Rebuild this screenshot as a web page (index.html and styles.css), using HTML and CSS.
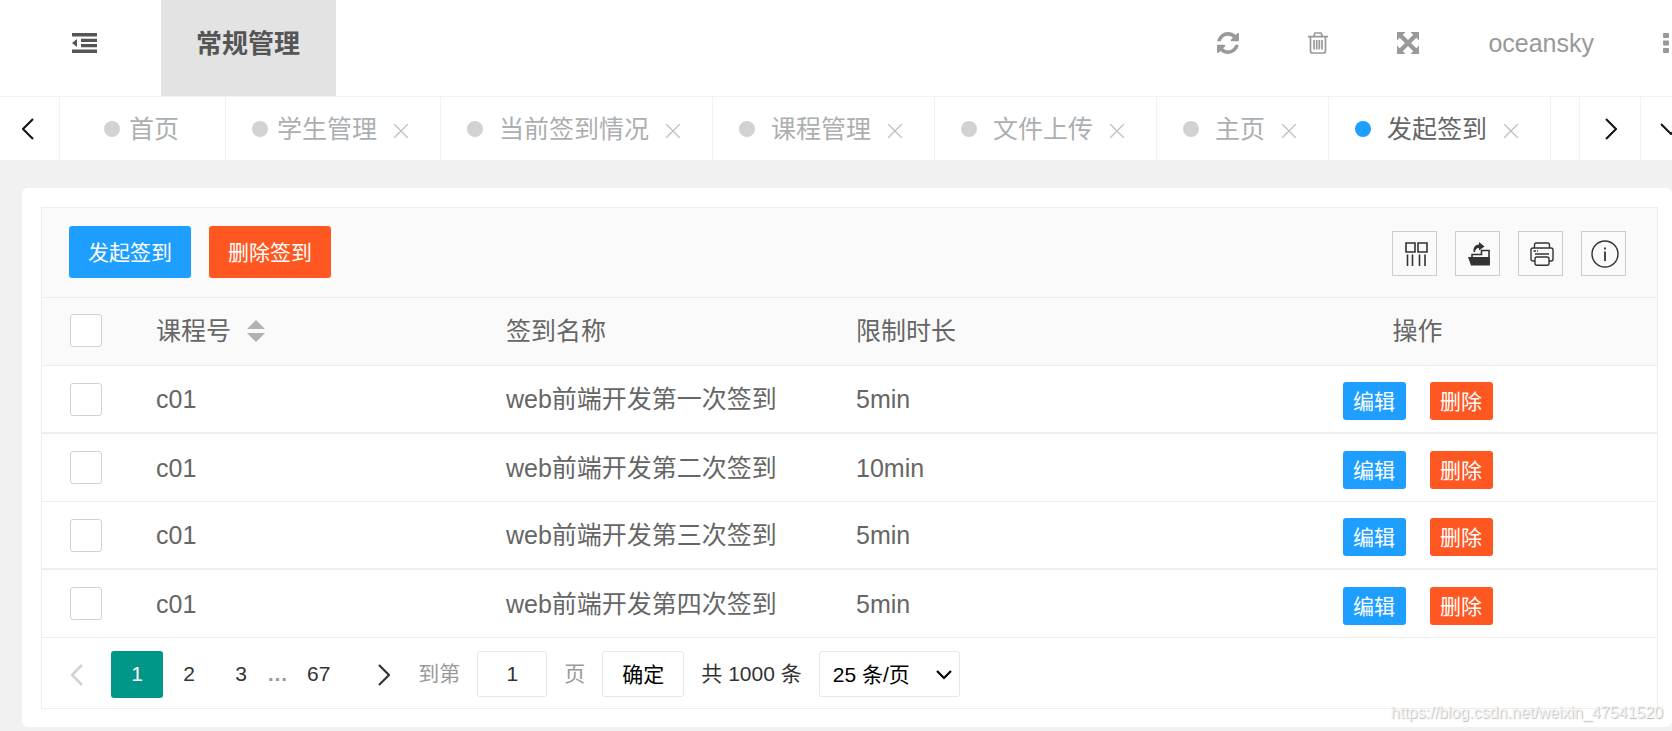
FILE: index.html
```html
<!DOCTYPE html>
<html lang="zh-CN">
<head>
<meta charset="utf-8">
<title>发起签到</title>
<link rel="stylesheet" href="styles.css">
</head>
<body>
<header class="header">
  <button class="menu-toggle" type="button" aria-label="菜单">
    <svg width="25" height="20" viewBox="0 0 25 20" fill="currentColor"><path d="M0 0h25v3.500H0zM9 5.800h16v3.200H9zM9 11h16v3.200H9zM0 16.500h25V20H0zM5 6v8L0 10z"/></svg>
  </button>
  <a class="nav-item" href="#">常规管理</a>
  <div class="header-tools">
    <button type="button" aria-label="刷新">
      <svg width="22" height="22" viewBox="0 0 1536 1536" fill="currentColor"><path d="M1511 928q0 5-1 7-64 268-268 434.500T764 1536q-146 0-282.500-55T238 1324l-129 129q-19 19-45 19t-45-19-19-45V960q0-26 19-45t45-19h448q26 0 45 19t19 45-19 45l-137 137q71 66 161 102t187 36q134 0 250-65t186-179q11-17 53-117 8-23 30-23h192q13 0 22.500 9.500t9.500 22.500zm25-800v448q0 26-19 45t-45 19h-448q-26 0-45-19t-19-45 19-45l138-138Q969 256 768 256q-134 0-250 65T332 500q-11 17-53 117-8 23-30 23H50q-13 0-22.500-9.500T18 608v-7q65-268 270-434.500T768 0q146 0 284 55.500T1297 212l130-129q19-19 45-19t45 19 19 45z"/></svg>
    </button>
    <button type="button" aria-label="清除">
      <svg width="20" height="22" viewBox="0 0 20 22" fill="none" stroke="currentColor" stroke-width="1.700"><path d="M0 4.700h20M5.500 4.500L7 1h6l1.500 3.500M2.500 5v14q0 2 2 2h11q2 0 2-2V5M6 8v9.500M8.700 8v9.500M11.300 8v9.500M14 8v9.500"/></svg>
    </button>
    <button type="button" aria-label="全屏">
      <svg width="22" height="22" viewBox="0 0 22 22" fill="currentColor"><path d="M0 0h8.500L5.800 2.700 11 7.900l5.200-5.200L13.500 0H22v8.500l-2.700-2.700L14.100 11l5.200 5.200 2.700-2.700V22h-8.500l2.700-2.700L11 14.100l-5.200 5.200L8.500 22H0v-8.500l2.700 2.700L7.900 11 2.700 5.800 0 8.500z"/></svg>
    </button>
    <a class="user" href="#">oceansky</a>
    <button type="button" aria-label="更多">
      <svg width="6" height="20" viewBox="0 0 6 20" fill="currentColor"><rect width="6" height="5" rx="1"/><rect y="7.500" width="6" height="5" rx="1"/><rect y="15" width="6" height="5" rx="1"/></svg>
    </button>
  </div>
</header>

<nav class="tabs">
  <button class="tab-arrow" type="button" aria-label="向左"><svg width="12" height="22" viewBox="0 0 12 22" fill="none" stroke="currentColor" stroke-width="2"><path d="M11 1L1 11l10 10"/></svg></button>
  <div class="tab-list">
    <div class="tab home"><i class="dot"></i><a href="#">首页</a></div>
    <div class="tab near"><i class="dot"></i><a href="#">学生管理</a><button class="close" type="button" aria-label="关闭"><svg width="14" height="14" viewBox="0 0 14 14"><path d="M0 0l14 14M14 0L0 14"/></svg></button></div>
    <div class="tab"><i class="dot"></i><a href="#">当前签到情况</a><button class="close" type="button" aria-label="关闭"><svg width="14" height="14" viewBox="0 0 14 14"><path d="M0 0l14 14M14 0L0 14"/></svg></button></div>
    <div class="tab"><i class="dot"></i><a href="#">课程管理</a><button class="close" type="button" aria-label="关闭"><svg width="14" height="14" viewBox="0 0 14 14"><path d="M0 0l14 14M14 0L0 14"/></svg></button></div>
    <div class="tab"><i class="dot"></i><a href="#">文件上传</a><button class="close" type="button" aria-label="关闭"><svg width="14" height="14" viewBox="0 0 14 14"><path d="M0 0l14 14M14 0L0 14"/></svg></button></div>
    <div class="tab"><i class="dot"></i><a href="#">主页</a><button class="close" type="button" aria-label="关闭"><svg width="14" height="14" viewBox="0 0 14 14"><path d="M0 0l14 14M14 0L0 14"/></svg></button></div>
    <div class="tab active"><i class="dot"></i><a href="#">发起签到</a><button class="close" type="button" aria-label="关闭"><svg width="14" height="14" viewBox="0 0 14 14"><path d="M0 0l14 14M14 0L0 14"/></svg></button></div>
  </div>
  <button class="tab-arrow end" type="button" aria-label="向右"><svg width="12" height="22" viewBox="0 0 12 22" fill="none" stroke="currentColor" stroke-width="2"><path d="M1 1l10 10L1 21"/></svg></button>
  <button class="tab-more" type="button" aria-label="更多标签"><svg width="22" height="12" viewBox="0 0 22 12" fill="none" stroke="currentColor" stroke-width="2"><path d="M1 1l10 10L21 1"/></svg></button>
</nav>

<main class="card">
  <section class="grid">
    <div class="toolbar">
      <button class="btn blue" type="button">发起签到</button>
      <button class="btn red" type="button">删除签到</button>
      <div class="tool-icons">
        <button type="button" aria-label="筛选列"><svg width="24" height="24" viewBox="0 0 24 24" fill="none" stroke="currentColor" stroke-width="1.600"><path d="M2 1h9v9H2zM14 1h9v9h-9zM3.500 12.500V24M8.500 12.500V24M15.500 12.500V24M21 12.500V24"/></svg></button>
        <button type="button" aria-label="导出"><svg width="22" height="24" viewBox="0 0 22 24" fill="currentColor"><path d="M0 15h21.800v8.500H3z"/><path d="M4 15.500V12.500h9.500V8.500H21V23" fill="none" stroke="currentColor" stroke-width="1.600"/><path d="M5.500 10q-.5-7.500 5.500-7.500V0l5.500 4.500L11 8.500V6q-3.500 0-4 4z"/></svg></button>
        <button type="button" aria-label="打印"><svg width="24" height="24" viewBox="0 0 24 24" fill="none" stroke="currentColor" stroke-width="1.400"><path d="M4.500 6V3q0-2 2-2h11q2 0 2 2v3M5 19H3q-2 0-2-2V8q0-2 2-2h18q2 0 2 2v9q0 2-2 2h-2M3.500 9h2.500M7 9h1M5 12h14"/><rect x="5" y="15" width="14" height="8.300" rx="2"/></svg></button>
        <button type="button" aria-label="提示"><svg width="28" height="28" viewBox="0 0 28 28" fill="none" stroke="currentColor" stroke-width="1.400"><circle cx="14" cy="14" r="13"/><path d="M14 11.500V21M14 7.500v2" stroke-width="1.800"/></svg></button>
      </div>
    </div>
    <table class="table">
      <colgroup><col class="c-check"><col class="c-data"><col class="c-data"><col class="c-data"><col></colgroup>
      <thead>
        <tr>
          <th><input type="checkbox" aria-label="全选"></th>
          <th><span class="sortable">课程号<svg width="18" height="22" viewBox="0 0 18 22" fill="#b2b2b2"><path d="M9 0l9 9H0zM0 13h18l-9 9z"/></svg></span></th>
          <th>签到名称</th><th>限制时长</th><th class="ops">操作</th>
        </tr>
      </thead>
      <tbody>
        <tr><td><input type="checkbox" aria-label="选择第一行"></td><td>c01</td><td>web前端开发第一次签到</td><td>5min</td><td class="ops"><div class="actions"><button class="mini blue" type="button">编辑</button><button class="mini red" type="button">删除</button></div></td></tr>
        <tr><td><input type="checkbox" aria-label="选择第二行"></td><td>c01</td><td>web前端开发第二次签到</td><td>10min</td><td class="ops"><div class="actions"><button class="mini blue" type="button">编辑</button><button class="mini red" type="button">删除</button></div></td></tr>
        <tr><td><input type="checkbox" aria-label="选择第三行"></td><td>c01</td><td>web前端开发第三次签到</td><td>5min</td><td class="ops"><div class="actions"><button class="mini blue" type="button">编辑</button><button class="mini red" type="button">删除</button></div></td></tr>
        <tr><td><input type="checkbox" aria-label="选择第四行"></td><td>c01</td><td>web前端开发第四次签到</td><td>5min</td><td class="ops"><div class="actions"><button class="mini blue" type="button">编辑</button><button class="mini red" type="button">删除</button></div></td></tr>
      </tbody>
    </table>
    <footer class="pager">
      <button class="prev" type="button" aria-label="上一页"><svg width="12" height="22" viewBox="0 0 12 22" fill="none" stroke="currentColor" stroke-width="2.500"><path d="M11 1L1 11l10 10"/></svg></button>
      <a class="page current" href="#">1</a>
      <a class="page" href="#">2</a>
      <a class="page" href="#">3</a>
      <span class="dots">…</span>
      <a class="page" href="#">67</a>
      <button class="next" type="button" aria-label="下一页"><svg width="12" height="22" viewBox="0 0 12 22" fill="none" stroke="currentColor" stroke-width="2.200"><path d="M1 1l10 10L1 21"/></svg></button>
      <div class="jump">
        <label for="page-no">到第</label>
        <input id="page-no" type="text" value="1">
        <span class="unit">页</span>
        <button class="confirm" type="button">确定</button>
        <span class="total">共 1000 条</span>
        <div class="limit">
          <select aria-label="每页条数"><option>25 条/页</option><option>50 条/页</option></select>
          <svg width="16" height="10" viewBox="0 0 16 10" fill="none" stroke="currentColor" stroke-width="2.200"><path d="M1 1l7 7 7-7"/></svg>
        </div>
      </div>
    </footer>
  </section>
</main>
<div class="watermark">https://blog.csdn.net/weixin_47541520</div>
</body>
</html>
```
FILE: styles.css
```css
* { box-sizing: border-box; }

body {
  margin: 0;
  min-height: 100vh;
  position: relative;
  overflow: hidden;
  background: #f1f1f1;
  color: #666;
  font-family: "Liberation Sans", "Noto Sans CJK SC", sans-serif;
  font-size: 25px;
  line-height: 36px;
}

button, input, select { font: inherit; color: inherit; margin: 0; }
button { padding: 0; border: 0; background: none; cursor: pointer; }
a { color: inherit; text-decoration: none; }
svg { display: block; flex: none; }

.header {
  display: flex;
  height: 97px;
  background: #fff;
  border-bottom: 1px solid #f2f2f2;
}
.menu-toggle {
  width: 161px;
  padding: 0 0 10px 72px;
  color: #555;
}
.nav-item {
  display: flex;
  align-items: center;
  padding: 0 36px 8px 35px;
  background: #e3e3e3;
  color: #555;
  font-size: 26px;
  font-weight: bold;
}
.header-tools {
  display: flex;
  align-items: center;
  gap: 69px;
  margin-left: auto;
  padding: 0 3px 10px 0;
  color: #999;
}

.tabs {
  display: flex;
  height: 63px;
  background: #fff;
}
.tab-arrow, .tab-more {
  display: flex;
  align-items: center;
  flex: none;
  color: #111;
}
.tab-arrow {
  justify-content: center;
  width: 60px;
  padding-right: 4px;
  border-right: 1px solid #f2f2f2;
}
.tab-arrow.end { width: 62px; padding: 0 0 0 2px; border-left: 1px solid #f2f2f2; }
.tab-more { width: 31px; padding-left: 19px; overflow: hidden; }
.tab-list { display: flex; flex: 1; min-width: 0; overflow: hidden; }
.tab {
  display: flex;
  align-items: center;
  flex: none;
  gap: 16px;
  padding: 0 32px 0 26px;
  border-right: 1px solid #f2f2f2;
  color: #acafb1;
}
.tab.home { gap: 9px; padding: 0 46px 0 44px; }
.tab.near .dot { margin-right: -7px; }
.dot { width: 16px; height: 16px; border-radius: 50%; background: #d2d2d2; }
.tab.active { color: #666; }
.tab.active .dot { background: #1e9fff; }
.close { padding: 4px 0 0 1px; color: #c2c2c2; }
.close svg { fill: none; stroke: currentColor; stroke-width: 1.4; }

.card {
  margin: 28px 0 0 22px;
  padding: 19px 14px 18px 19px;
  background: #fff;
  border-radius: 6px;
}
.grid { border: 1px solid #eee; }
.toolbar {
  display: flex;
  align-items: center;
  gap: 18px;
  height: 90px;
  padding: 0 31px 0 27px;
  background: #fafafa;
  border-bottom: 1px solid #eee;
}
.btn {
  height: 52px;
  padding: 2px 19px 0;
  border-radius: 3px;
  color: #fff;
  font-size: 21px;
  margin-bottom: 2px;
}
.blue { background: #1e9fff; }
.red { background: #ff5722; }
.tool-icons { display: flex; gap: 18px; margin: 2px 0 0 auto; }
.tool-icons button {
  display: flex;
  align-items: center;
  justify-content: center;
  width: 45px;
  height: 45px;
  padding: 0 0 0 3px;
  border: 1px solid #ccc;
  color: #333;
}

.table { width: 100%; border-collapse: separate; border-spacing: 0; table-layout: fixed; }
.c-check { width: 88px; }
.c-data { width: 350px; }
.table th, .table td {
  height: 68px;
  padding: 0 26px;
  border-bottom: 1px solid #eee;
  text-align: left;
  font-weight: normal;
  white-space: nowrap;
}
.table tbody tr:nth-child(odd) td { border-bottom-width: 2px; }
.table thead { background: #fafafa; }
.table th { padding-bottom: 2px; }
.table .ops { padding-right: 28px; text-align: center; }
.table input {
  appearance: none;
  display: block;
  width: 32px;
  height: 33px;
  margin-left: 2px;
  border: 1px solid #d2d2d2;
  border-radius: 3px;
  background: #fff;
}
.sortable { display: flex; align-items: center; gap: 16px; }
.actions { display: flex; justify-content: center; gap: 24px; padding-top: 4px; }
.mini {
  width: 63px;
  height: 38px;
  padding-top: 2px;
  border-radius: 3px;
  color: #fff;
  font-size: 21px;
}

.pager {
  display: flex;
  padding: 13px 24px 10px;
  font-size: 21px;
  line-height: 46px;
  color: #333;
}
.pager .prev { width: 22px; margin-right: 23px; padding-left: 5px; color: #d2d2d2; }
.page { min-width: 52px; padding: 0 20px; text-align: center; }
.page.current { background: #009688; color: #fff; border-radius: 3px; }
.dots { width: 20px; text-align: center; color: #999; font-weight: bold; }
.pager .next { width: 68px; padding-left: 28px; }
.jump { display: flex; gap: 17px; }
.jump label, .unit { color: #999; }
.jump input, .confirm, .limit select {
  height: 46px;
  border: 1px solid #e8e8e8;
  border-radius: 3px;
  background: #fff;
}
.jump input { width: 70px; text-align: center; }
.confirm { width: 82px; color: #000; }
.limit { position: relative; color: #000; }
.limit select { appearance: none; width: 141px; padding: 0 13px; }
.limit svg { position: absolute; right: 8px; top: 19px; pointer-events: none; }

.watermark {
  position: absolute;
  right: 9px;
  bottom: 6px;
  color: #f4f4f4;
  font-size: 16px;
  line-height: 24px;
  text-shadow: 1px 1px 1px #bbb;
}
```
